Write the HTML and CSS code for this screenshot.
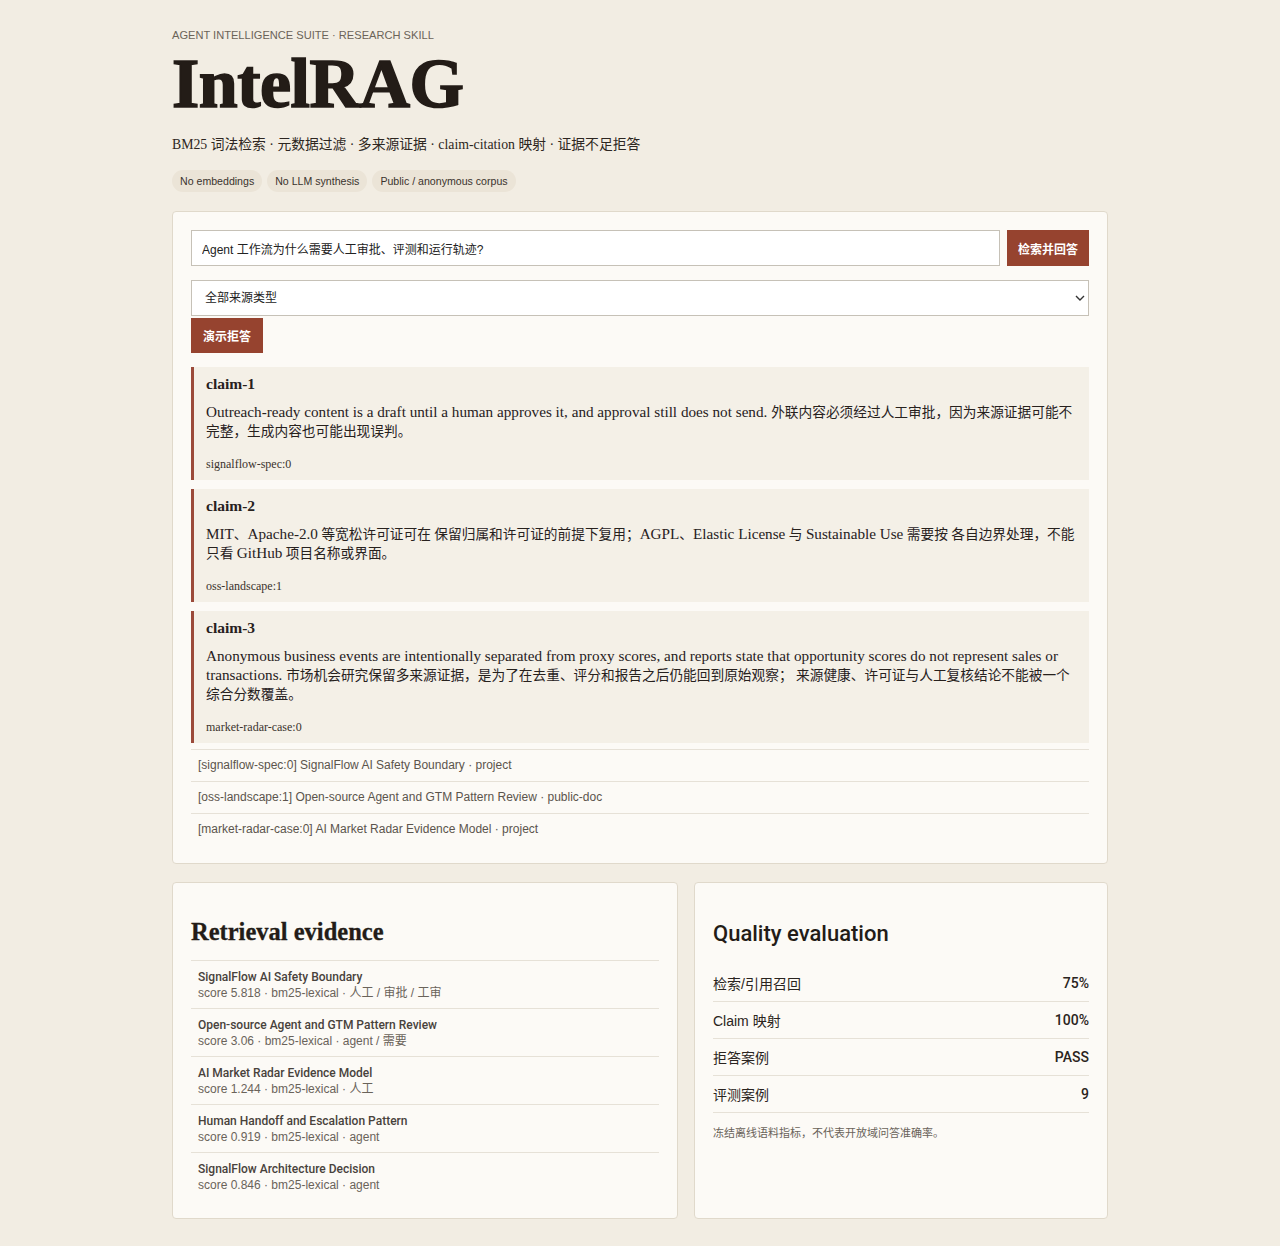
FILE: index.html
```html
<!DOCTYPE html>
<html lang="zh-CN">
<head>
    <meta charset="UTF-8">
    <title>IntelRAG</title>
    <link rel="stylesheet" href="styles.css">
</head>
<body>

<div class="page">

    <!-- Шапка -->
    <header class="hero">
        <div class="eyebrow">AGENT INTELLIGENCE SUITE · RESEARCH SKILL</div>
        <h1 class="title">IntelRAG</h1>
        <p class="subtitle">BM25 词法检索 · 元数据过滤 · 多来源证据 · claim-citation 映射 · 证据不足拒答</p>
        <div class="chips">
            <span class="chip">No embeddings</span>
            <span class="chip">No LLM synthesis</span>
            <span class="chip">Public / anonymous corpus</span>
        </div>
    </header>

    <!-- Поиск и ответ -->
    <section class="card">
        <div class="search-row">
            <input class="query" type="text" value="Agent 工作流为什么需要人工审批、评测和运行轨迹?">
            <button class="btn">检索并回答</button>
        </div>

        <div class="select-wrap">
            <select class="source-select">
                <option>全部来源类型</option>
            </select>
            <svg class="chevron" width="10" height="6" viewBox="0 0 10 6">
                <path d="M1 1l4 4 4-4" fill="none" stroke="#333" stroke-width="1.4"/>
            </svg>
        </div>
        <button class="btn btn-refuse">演示拒答</button>

        <!-- Утверждения: латиница в span.en, у неё свой кегль -->
        <div class="claims">
            <div class="claim">
                <h4>claim-1</h4>
                <p><span class="en">Outreach-ready content is a draft until a human approves it, and approval still does not send. </span>外联内容必须经过人工审批，因为来源证据可能不完整，生成内容也可能出现误判。</p>
                <div class="cite">signalflow-spec:0</div>
            </div>
            <div class="claim">
                <h4>claim-2</h4>
                <p><span class="en">MIT</span>、<span class="en">Apache-2.0</span> 等宽松许可证可在 保留归属和许可证的前提下复用；<span class="en">AGPL</span>、<span class="en">Elastic License</span> 与 <span class="en">Sustainable Use</span> 需要按 各自边界处理，不能只看 <span class="en">GitHub</span> 项目名称或界面。</p>
                <div class="cite">oss-landscape:1</div>
            </div>
            <div class="claim">
                <h4>claim-3</h4>
                <p><span class="en">Anonymous business events are intentionally separated from proxy scores, and reports state that opportunity scores do not represent sales or transactions. </span>市场机会研究保留多来源证据，是为了在去重、评分和报告之后仍能回到原始观察； 来源健康、许可证与人工复核结论不能被一个综合分数覆盖。</p>
                <div class="cite">market-radar-case:0</div>
            </div>
        </div>

        <ul class="sources">
            <li>[signalflow-spec:0] SignalFlow AI Safety Boundary · project</li>
            <li>[oss-landscape:1] Open-source Agent and GTM Pattern Review · public-doc</li>
            <li>[market-radar-case:0] AI Market Radar Evidence Model · project</li>
        </ul>
    </section>

    <!-- Нижние панели -->
    <div class="panels">
        <section class="card">
            <h2 class="panel-title serif">Retrieval evidence</h2>
            <ul class="evidence">
                <li>
                    <div class="ev-title">SignalFlow AI Safety Boundary</div>
                    <div class="ev-meta">score 5.818 · bm25-lexical · 人工 / 审批 / 工审</div>
                </li>
                <li>
                    <div class="ev-title">Open-source Agent and GTM Pattern Review</div>
                    <div class="ev-meta">score 3.06 · bm25-lexical · agent / 需要</div>
                </li>
                <li>
                    <div class="ev-title">AI Market Radar Evidence Model</div>
                    <div class="ev-meta">score 1.244 · bm25-lexical · 人工</div>
                </li>
                <li>
                    <div class="ev-title">Human Handoff and Escalation Pattern</div>
                    <div class="ev-meta">score 0.919 · bm25-lexical · agent</div>
                </li>
                <li>
                    <div class="ev-title">SignalFlow Architecture Decision</div>
                    <div class="ev-meta">score 0.846 · bm25-lexical · agent</div>
                </li>
            </ul>
        </section>

        <section class="card">
            <h2 class="panel-title sans">Quality evaluation</h2>
            <div class="metric"><span>检索/引用召回</span><strong>75%</strong></div>
            <div class="metric"><span>Claim 映射</span><strong>100%</strong></div>
            <div class="metric"><span>拒答案例</span><strong>PASS</strong></div>
            <div class="metric"><span>评测案例</span><strong>9</strong></div>
            <p class="note">冻结离线语料指标，不代表开放域问答准确率。</p>
        </section>
    </div>

</div>

</body>
</html>
```

FILE: styles.css
```css
/* Общие */
body {
    margin: 0;
    background: #f2ede3;
    color: #27211d;
    font-family: "Liberation Sans", "Noto Sans CJK SC", sans-serif;
}

.page {
    width: 936px;
    margin: 0 auto;
    padding: 28px 0 28px;
}

.serif {
    font-family: "Liberation Serif", "Noto Sans CJK SC", serif;
}

/* Шапка */
.eyebrow {
    font-size: 11.1px;
    line-height: 14px;
    color: #6b6358;
}

.title {
    margin: 7px 0 0;
    font-family: "Liberation Serif", serif;
    font-size: 70px;
    line-height: 70px;
    font-weight: 700;
    letter-spacing: -0.5px;
    color: #231c17;
    -webkit-text-stroke: 1.6px #231c17;
}

.subtitle {
    margin: 15px 0 0;
    font-family: "Liberation Serif", "Noto Sans CJK SC", serif;
    font-size: 13.8px;
    line-height: 22px;
    color: #2d2621;
}

.chips {
    display: flex;
    gap: 5px;
    margin-top: 14px;
}

.chip {
    background: #ebe4d7;
    border-radius: 11px;
    padding: 0 8px;
    height: 22px;
    line-height: 22px;
    font-size: 10.6px;
    color: #3a332d;
}

/* Карточки */
.card {
    background: #fcfaf6;
    border: 1px solid #e0d9cb;
    border-radius: 4px;
    padding: 18px;
    margin-top: 19px;
}

.search-row {
    display: flex;
    gap: 7px;
}

.query {
    flex: 1;
    height: 36px;
    box-sizing: border-box;
    border: 1px solid #c6c1b7;
    background: #fff;
    padding: 0 10px;
    font-family: inherit;
    font-size: 12px;
    color: #222;
    outline: none;
}

.btn {
    height: 36px;
    border: none;
    background: #96432f;
    color: #fff;
    font-family: inherit;
    font-size: 12px;
    font-weight: 700;
    padding: 0 11px;
    cursor: pointer;
}

.select-wrap {
    position: relative;
    margin-top: 14px;
}

.source-select {
    display: block;
    width: 100%;
    height: 36px;
    appearance: none;
    -webkit-appearance: none;
    border: 1px solid #c6c1b7;
    border-radius: 0;
    background: #fff;
    padding: 0 13px;
    font-family: inherit;
    font-size: 12px;
    color: #222;
}

.chevron {
    position: absolute;
    right: 4px;
    top: 15px;
}

.btn-refuse {
    display: block;
    margin-top: 2px;
    height: 35px;
    padding: 0 12px;
}

/* Утверждения */
.claims {
    margin-top: 14px;
}

.claim {
    background: #f4f0e7;
    border-left: 3px solid #9b4a3a;
    padding: 8px 12px 7px;
    margin-bottom: 9px;
    font-family: "Liberation Serif", "Noto Sans CJK SC", serif;
    color: #27211d;
}

.claim:last-child {
    margin-bottom: 6px;
}

.claim h4 {
    margin: 0 0 10px;
    font-size: 15.5px;
    line-height: 18px;
}

.claim p {
    margin: 0 0 14px;
    font-size: 13.7px;
    line-height: 19px;
}

.claim .en {
    font-size: 15.2px;
    line-height: 16px;
}

.cite {
    font-size: 12px;
    line-height: 18px;
    color: #3a332d;
}

.sources {
    list-style: none;
    margin: 0;
    padding: 0;
}

.sources li {
    border-top: 1px solid #e6e1d7;
    height: 31px;
    line-height: 31px;
    padding: 0 7px;
    font-size: 12px;
    color: #5b544c;
}

/* Нижние панели */
.panels {
    display: grid;
    grid-template-columns: 11fr 9fr;
    gap: 16px;
    margin-top: 18px;
}

.panels .card {
    margin-top: 0;
}

.panel-title {
    margin: 17px 0 14px;
    font-size: 24.5px;
    line-height: 28px;
    font-weight: 700;
    color: #231c17;
    -webkit-text-stroke: 0.3px #231c17;
}

.panel-title.sans {
    margin: 20px 0 18px;
    font-family: Roboto, "Noto Sans CJK SC", sans-serif;
    font-size: 22px;
    line-height: 26px;
    font-weight: 500;
    -webkit-text-stroke: 0;
}

.evidence {
    list-style: none;
    margin: 0;
    padding: 0;
}

.evidence li {
    border-top: 1px solid #e6e1d7;
    padding: 8px 7px 7px;
    font-size: 12px;
    line-height: 16px;
}

.ev-title {
    font-family: Roboto, "Noto Sans CJK SC", sans-serif;
    font-size: 12px;
    color: #48423c;
    font-weight: 500;
}

.ev-meta {
    color: #6a635a;
}

.metric {
    display: flex;
    justify-content: space-between;
    align-items: center;
    height: 36px;
    border-bottom: 1px solid #e6e1d7;
    font-size: 14px;
    color: #2a2420;
}

.metric strong {
    font-family: Roboto, sans-serif;
    font-weight: 500;
}

.note {
    margin: 12px 0 0;
    font-size: 11px;
    line-height: 16px;
    color: #6a635a;
}
```
